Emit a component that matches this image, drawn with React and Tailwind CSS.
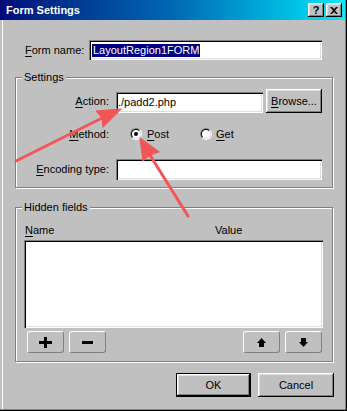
import React from "react";

const raised =
  "bg-[#c0c0c0] shadow-[inset_-1px_-1px_#000,inset_1px_1px_#fff,inset_-2px_-2px_#808080,inset_2px_2px_#dfdfdf]";
const sunken =
  "bg-white shadow-[inset_1px_1px_#808080,inset_2px_2px_#000,inset_-1px_-1px_#fff,inset_-2px_-2px_#dfdfdf]";
const flatBtn =
  "w-[37px] h-[22px] flex items-center justify-center rounded-[3px] border border-t-white border-l-white border-b-[#808080] border-r-[#808080]";

function U({ children }) {
  return <span className="underline underline-offset-[2px]">{children}</span>;
}

function Group({ label, className, children }) {
  return (
    <div
      className={`relative w-full border border-[#808080] shadow-[1px_1px_0_#fff,inset_1px_1px_0_#fff] ${className}`}
    >
      <span className="absolute -top-[7px] left-[6px] px-[2px] bg-[#c0c0c0] leading-[13px]">
        {label}
      </span>
      {children}
    </div>
  );
}

function Radio({ checked }) {
  return (
    <div className="w-[12px] h-[12px] rounded-full border border-t-[#808080] border-l-[#808080] border-b-white border-r-white">
      <div className="w-[10px] h-[10px] rounded-full border border-t-black border-l-black border-b-[#dfdfdf] border-r-[#dfdfdf] bg-white flex items-center justify-center">
        {checked && <div className="w-[4px] h-[4px] rounded-full bg-black" />}
      </div>
    </div>
  );
}

const TitleBar = () => (
  <div className="w-[345px] h-[20px] shrink-0 flex items-center pl-[6px] pr-[3px] bg-linear-to-r from-[#00087a] via-[#0068b4] to-[#10e8f8]">
    <span className="flex-1 text-white font-bold text-[11px] leading-[13px]">Form Settings</span>
    <div className="flex gap-[2px]">
      <div className={`w-[16px] h-[14px] flex items-center justify-center font-bold text-[11px] leading-none ${raised}`}>
        ?
      </div>
      <div className={`w-[16px] h-[14px] flex items-center justify-center ${raised}`}>
        <svg width="8" height="7" viewBox="0 0 8 7">
          <path d="M0 0h2l2 2 2-2h2L5 3.5 8 7H6L4 5 2 7H0l3-3.5z" fill="#000" />
        </svg>
      </div>
    </div>
  </div>
);

export default function App() {
  return (
    <div
      className="relative w-[347px] h-[411px] overflow-hidden bg-[#c0c0c0] text-black text-[11px] leading-[13px] shadow-[inset_-1px_-1px_#000,inset_-2px_-2px_#808080,inset_2px_0_#c0c0c0,inset_3px_0_#fff]"
      style={{ fontFamily: '"Liberation Sans", Arial, sans-serif' }}
    >
      <TitleBar />

      <div className="pl-[15px] pr-[14px]">
        {/* form name */}
        <div className="mt-[20px] pl-[10px] flex items-center">
          <span className="w-[64px]">
            <U>F</U>orm name:
          </span>
          <div className={`w-[233px] h-[20px] flex items-center pl-[3px] ${sunken}`}>
            <span className="bg-[#000080] text-white px-[1px]">LayoutRegion1FORM</span>
          </div>
        </div>

        {/* settings */}
        <Group label="Settings" className="mt-[17px] h-[111px] pt-[11px]">
          <div className="flex items-end">
            <span className="w-[93px] text-right self-center">
              <U>A</U>ction:
            </span>
            <div className={`ml-[7px] w-[147px] h-[21px] flex items-center pl-[2px] ${sunken}`}>
              ./padd2.php
            </div>
            <div className={`ml-[3px] w-[56px] h-[24px] flex items-center justify-center ${raised}`}>
              <span>
                <U>B</U>rowse...
              </span>
            </div>
          </div>

          <div className="mt-[13px] h-[16px] flex items-center">
            <span className="w-[93px] text-right">
              <U>M</U>ethod:
            </span>
            <div className="ml-[21px] w-[70px] flex items-center gap-[5px]">
              <Radio checked />
              <span>
                <U>P</U>ost
              </span>
            </div>
            <div className="flex items-center gap-[4px]">
              <Radio />
              <span>
                <U>G</U>et
              </span>
            </div>
          </div>

          <div className="mt-[17px] flex items-center">
            <span className="w-[93px] text-right">
              <U>E</U>ncoding type:
            </span>
            <div className={`ml-[7px] w-[206px] h-[21px] ${sunken}`} />
          </div>
        </Group>

        {/* hidden fields */}
        <Group label="Hidden fields" className="mt-[19px] h-[155px] pt-[16px]">
          <div className="pl-[9px] flex">
            <span className="w-[190px]">
              <U>N</U>ame
            </span>
            <span>Value</span>
          </div>
          <div className={`mt-[3px] ml-[8px] w-[299px] h-[88px] ${sunken}`} />
          <div className="mt-[3px] ml-[11px] w-[295px] flex justify-between">
            <div className="flex gap-[5px]">
              <div className={flatBtn}>
                <svg width="13" height="11" viewBox="0 0 13 11">
                  <path d="M5 0h3v4h5v3H8v4H5V7H0V4h5z" fill="#000" />
                </svg>
              </div>
              <div className={flatBtn}>
                <svg width="11" height="3" viewBox="0 0 11 3">
                  <rect width="11" height="3" fill="#000" />
                </svg>
              </div>
            </div>
            <div className="flex gap-[5px]">
              <div className={flatBtn}>
                <svg width="9" height="9" viewBox="0 0 9 9">
                  <path d="M4.5 0L9 5H0z" fill="#000" />
                  <rect x="2" y="5" width="5" height="4" fill="#000" />
                </svg>
              </div>
              <div className={flatBtn}>
                <svg width="9" height="9" viewBox="0 0 9 9">
                  <rect x="2" y="0" width="5" height="4" fill="#000" />
                  <path d="M0 4h9L4.5 9z" fill="#000" />
                </svg>
              </div>
            </div>
          </div>
        </Group>

        {/* dialog buttons */}
        <div className="mt-[11px] -mr-[1px] flex justify-end gap-[7px]">
          <div className="w-[75px] h-[24px] border border-black">
            <div className={`w-full h-full flex items-center justify-center ${raised}`}>OK</div>
          </div>
          <div className={`w-[76px] h-[24px] flex items-center justify-center ${raised}`}>Cancel</div>
        </div>
      </div>

      {/* annotation arrows */}
      <svg className="absolute inset-0 pointer-events-none" width="347" height="411" viewBox="0 0 347 411">
        <g stroke="#f25555" strokeWidth="3" strokeLinecap="round" fill="#f25555">
          <line x1="16" y1="161" x2="104" y2="117" />
          <path d="M121 109 L96 111 L102 118 L103 127 Z" strokeWidth="1" strokeLinejoin="round" />
          <line x1="188" y1="216" x2="148" y2="152" />
          <path d="M140 138 L143 161 L150 155 L159 152 Z" strokeWidth="1" strokeLinejoin="round" />
        </g>
      </svg>
    </div>
  );
}
